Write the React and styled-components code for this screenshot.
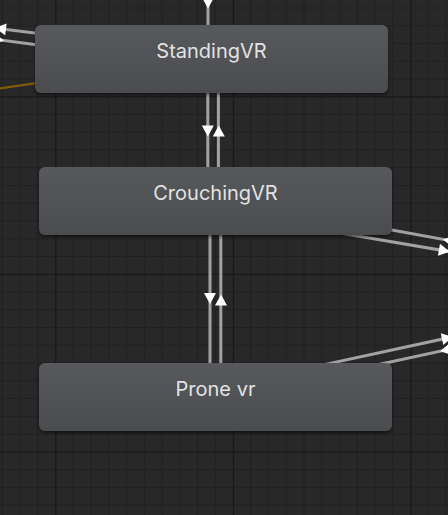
import React from "react";
import styled, { createGlobalStyle } from "styled-components";

const Global = createGlobalStyle`
  html, body { margin: 0; padding: 0; background: #282828; }
  body { font-family: Inter, "Noto Sans", sans-serif; }
`;

const Canvas = styled.div`
  position: relative;
  width: 448px;
  height: 515px;
  overflow: hidden;
  background-color: #282828;
  background-image:
    linear-gradient(to right, #181818 0 1px, transparent 1px),
    linear-gradient(to bottom, #181818 0 1px, transparent 1px),
    linear-gradient(to right, #202020 0 1px, transparent 1px),
    linear-gradient(to bottom, #202020 0 1px, transparent 1px);
  background-size: 177.6px 100%, 100% 177.6px, 17.76px 100%, 100% 17.76px;
  background-position: 55.5px 0, 0 96.3px, 1.8px 0, 0 7.5px;
`;

const Edges = styled.svg`
  position: absolute;
  left: 0;
  top: 0;
  width: 448px;
  height: 515px;
`;

const StateNode = styled.div`
  position: absolute;
  left: ${(p) => p.$x}px;
  top: ${(p) => p.$y}px;
  width: 353px;
  height: 68px;
  box-sizing: border-box;
  padding-top: 14px;
  border-radius: 6px;
  background: linear-gradient(to bottom, #57595d, #4a4c50);
  box-shadow: 0 2px 3px rgba(0, 0, 0, 0.5);
  color: #e2e2e2;
  font-family: Inter, "Noto Sans", sans-serif;
  font-size: 20px;
  text-align: center;
  white-space: nowrap;
`;

function arrow(tx, ty, dx, dy, len = 11, w = 12) {
  const m = Math.hypot(dx, dy);
  const ux = dx / m;
  const uy = dy / m;
  const bx = tx - ux * len;
  const by = ty - uy * len;
  const px = -uy * (w / 2);
  const py = ux * (w / 2);
  return `${tx},${ty} ${bx + px},${by + py} ${bx - px},${by - py}`;
}

const LINE = "#a2a2a2";

const lines = [
  // top incoming
  [208, -5, 208, 26],
  // standing <-> crouching
  [207.8, 90, 207.8, 170],
  [218.4, 90, 218.4, 170],
  // crouching <-> prone
  [210, 232, 210, 366],
  [220.8, 232, 220.8, 366],
  // left of standing
  [100, 41.1, -20, 26.3],
  [100, 52.9, -20, 37.3],
  // right of crouching
  [300, 213.3, 460, 242.5],
  [340, 233.0, 460, 253.4],
  // right of prone
  [300, 369.9, 460, 335.3],
  [300, 381.5, 460, 347],
];

const arrows = [
  arrow(208, 8.5, 0, 1),
  arrow(207.8, 136.5, 0, 1),
  arrow(218.8, 125.5, 0, -1),
  arrow(210, 304, 0, 1),
  arrow(221, 294.5, 0, -1),
  arrow(-5, 28, -1, -0.123),
  arrow(4, 40.4, 1, 0.13),
  arrow(443, 239.4, -1, -0.182),
  arrow(449.8, 251.6, 1, 0.172),
  arrow(452.8, 336.9, 1, -0.216),
  arrow(440, 351.3, -1, 0.216),
];

const states = [
  { name: "StandingVR", x: 35, y: 25 },
  { name: "CrouchingVR", x: 39, y: 167 },
  { name: "Prone vr", x: 39, y: 363 },
];

export default function App() {
  return (
    <>
      <Global />
      <Canvas>
        <Edges viewBox="0 0 448 515">
          <line x1="0" y1="88.3" x2="120" y2="71" stroke="#83590a" strokeWidth="2.2" />
          {lines.map(([x1, y1, x2, y2], i) => (
            <line key={i} x1={x1} y1={y1} x2={x2} y2={y2} stroke={LINE} strokeWidth="3" />
          ))}
          {arrows.map((pts, i) => (
            <polygon key={i} points={pts} fill="#ffffff" />
          ))}
        </Edges>
        {states.map((s) => (
          <StateNode key={s.name} $x={s.x} $y={s.y}>
            {s.name}
          </StateNode>
        ))}
      </Canvas>
    </>
  );
}
